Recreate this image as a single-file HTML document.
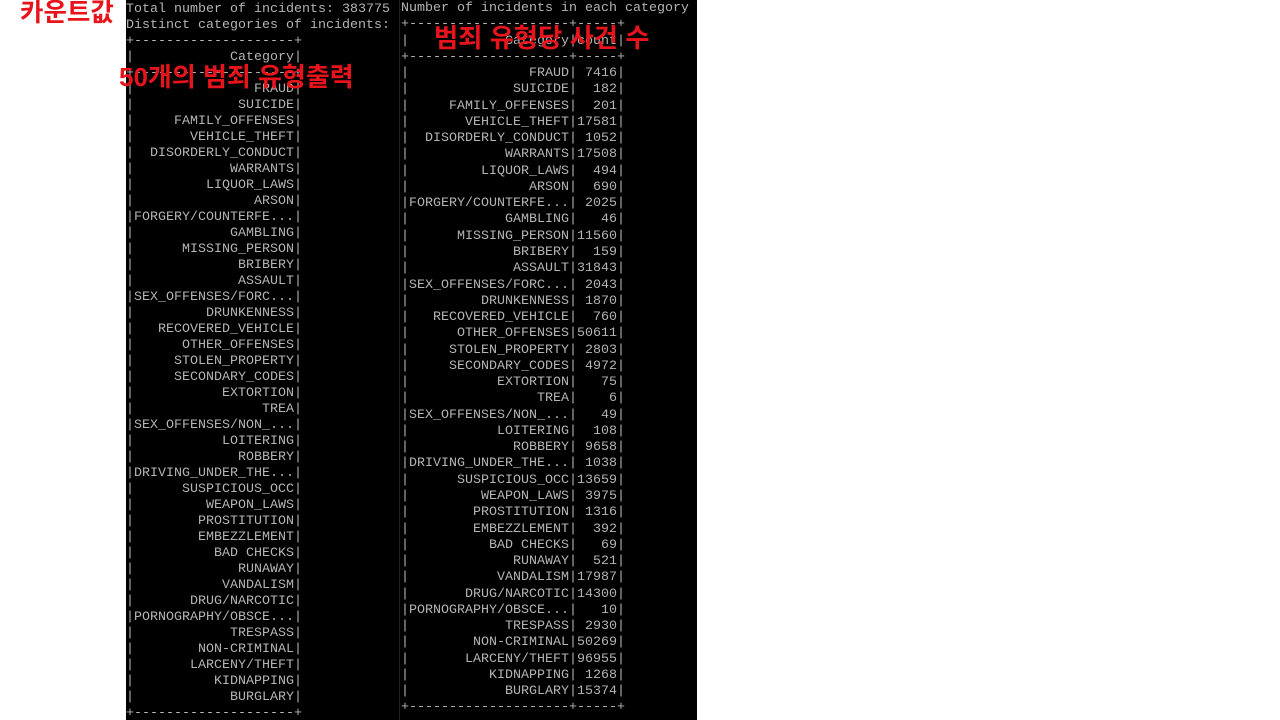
<!DOCTYPE html>
<html><head><meta charset="utf-8"><style>
html,body{margin:0;padding:0;background:#fff;width:1280px;height:720px;overflow:hidden;position:relative}
.bg{position:absolute;left:126px;top:0;width:571px;height:720px;background:#000}
.div{position:absolute;left:399px;top:0;width:1px;height:720px;background:#222}
pre{position:absolute;margin:0;font-family:"Liberation Mono",monospace;font-size:13.33px;color:#b4b4b4;white-space:pre}
#l{left:126px;top:2px;line-height:16px}
#r{left:401px;top:1px;line-height:16.26px}
.k{position:absolute;color:#e8141c;font-weight:bold;font-family:"Liberation Sans","Noto Sans CJK KR",sans-serif;white-space:nowrap;line-height:30px}
</style></head><body>
<div class="bg"></div><div class="div"></div>
<pre id="l">Total number of incidents: 383775
Distinct categories of incidents:
+--------------------+
|            Category|
+--------------------+
|               FRAUD|
|             SUICIDE|
|     FAMILY_OFFENSES|
|       VEHICLE_THEFT|
|  DISORDERLY_CONDUCT|
|            WARRANTS|
|         LIQUOR_LAWS|
|               ARSON|
|FORGERY/COUNTERFE...|
|            GAMBLING|
|      MISSING_PERSON|
|             BRIBERY|
|             ASSAULT|
|SEX_OFFENSES/FORC...|
|         DRUNKENNESS|
|   RECOVERED_VEHICLE|
|      OTHER_OFFENSES|
|     STOLEN_PROPERTY|
|     SECONDARY_CODES|
|           EXTORTION|
|                TREA|
|SEX_OFFENSES/NON_...|
|           LOITERING|
|             ROBBERY|
|DRIVING_UNDER_THE...|
|      SUSPICIOUS_OCC|
|         WEAPON_LAWS|
|        PROSTITUTION|
|        EMBEZZLEMENT|
|          BAD CHECKS|
|             RUNAWAY|
|           VANDALISM|
|       DRUG/NARCOTIC|
|PORNOGRAPHY/OBSCE...|
|            TRESPASS|
|        NON-CRIMINAL|
|       LARCENY/THEFT|
|          KIDNAPPING|
|            BURGLARY|
+--------------------+</pre>
<pre id="r">Number of incidents in each category
+--------------------+-----+
|            Category|count|
+--------------------+-----+
|               FRAUD| 7416|
|             SUICIDE|  182|
|     FAMILY_OFFENSES|  201|
|       VEHICLE_THEFT|17581|
|  DISORDERLY_CONDUCT| 1052|
|            WARRANTS|17508|
|         LIQUOR_LAWS|  494|
|               ARSON|  690|
|FORGERY/COUNTERFE...| 2025|
|            GAMBLING|   46|
|      MISSING_PERSON|11560|
|             BRIBERY|  159|
|             ASSAULT|31843|
|SEX_OFFENSES/FORC...| 2043|
|         DRUNKENNESS| 1870|
|   RECOVERED_VEHICLE|  760|
|      OTHER_OFFENSES|50611|
|     STOLEN_PROPERTY| 2803|
|     SECONDARY_CODES| 4972|
|           EXTORTION|   75|
|                TREA|    6|
|SEX_OFFENSES/NON_...|   49|
|           LOITERING|  108|
|             ROBBERY| 9658|
|DRIVING_UNDER_THE...| 1038|
|      SUSPICIOUS_OCC|13659|
|         WEAPON_LAWS| 3975|
|        PROSTITUTION| 1316|
|        EMBEZZLEMENT|  392|
|          BAD CHECKS|   69|
|             RUNAWAY|  521|
|           VANDALISM|17987|
|       DRUG/NARCOTIC|14300|
|PORNOGRAPHY/OBSCE...|   10|
|            TRESPASS| 2930|
|        NON-CRIMINAL|50269|
|       LARCENY/THEFT|96955|
|          KIDNAPPING| 1268|
|            BURGLARY|15374|
+--------------------+-----+</pre>
<div class="k" style="left:20px;top:-2px;font-size:25.5px">카운트값</div>
<div class="k" style="left:119px;top:62px;font-size:26px">50개의 범죄 유형출력</div>
<div class="k" style="left:434px;top:23px;font-size:26.3px">범죄 유형당 사건 수</div>
</body></html>
